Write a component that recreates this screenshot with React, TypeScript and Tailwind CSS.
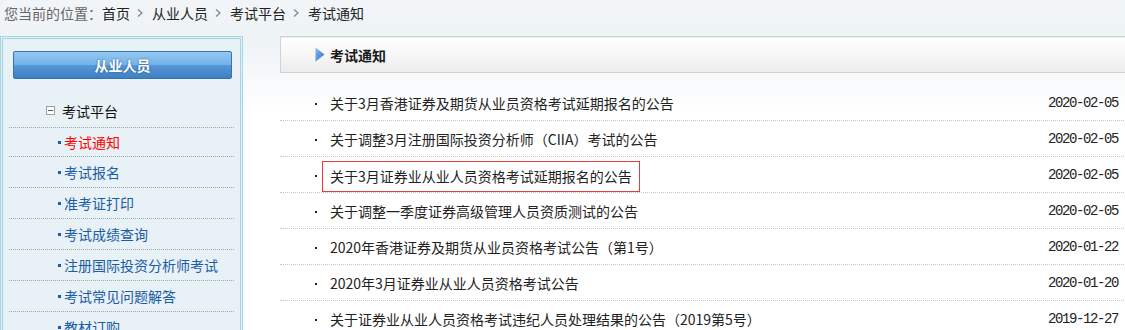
import React from "react";

const FONT = '"Noto Sans CJK SC", "Noto Sans", sans-serif';

const navItems: { label: string; h: string; active?: boolean }[] = [
  { label: "考试通知", h: "h-[29px]", active: true },
  { label: "考试报名", h: "h-[31px]" },
  { label: "准考证打印", h: "h-[31px]" },
  { label: "考试成绩查询", h: "h-[31px]" },
  { label: "注册国际投资分析师考试", h: "h-[31px]" },
  { label: "考试常见问题解答", h: "h-[31px]" },
  { label: "教材订购", h: "h-[31px]" },
];

const news: { title: string; date: string; boxed?: boolean }[] = [
  { title: "关于3月香港证券及期货从业员资格考试延期报名的公告", date: "2020-02-05" },
  { title: "关于调整3月注册国际投资分析师（CIIA）考试的公告", date: "2020-02-05" },
  { title: "关于3月证券业从业人员资格考试延期报名的公告", date: "2020-02-05", boxed: true },
  { title: "关于调整一季度证券高级管理人员资质测试的公告", date: "2020-02-05" },
  { title: "2020年香港证券及期货从业员资格考试公告（第1号）", date: "2020-01-22" },
  { title: "2020年3月证券业从业人员资格考试公告", date: "2020-01-20" },
  { title: "关于证券业从业人员资格考试违纪人员处理结果的公告（2019第5号）", date: "2019-12-27" },
];

function Chevron() {
  return (
    <svg width="6" height="10" viewBox="0 0 6 10" className="ml-[7px] mr-[9px] shrink-0">
      <polyline points="1,1.5 5,5 1,8.5" fill="none" stroke="#7a8a99" strokeWidth="1.3" />
    </svg>
  );
}

export default function App() {
  return (
    <div
      className="w-[1125px] h-[330px] overflow-hidden bg-[linear-gradient(to_bottom,#f1f5f8_0px,#eef3f6_40px,#ffffff_110px)] text-[14px] text-[#222]"
      style={{ fontFamily: FONT }}
    >
      {/* breadcrumb */}
      <div className="h-[26px] pl-[4px] flex items-center leading-none whitespace-nowrap">
        <span className="text-[#666]">您当前的位置：</span>
        <span>首页</span>
        <Chevron />
        <span>从业人员</span>
        <Chevron />
        <span>考试平台</span>
        <Chevron />
        <span>考试通知</span>
      </div>

      <div className="mt-[10px] flex">
        {/* left panel */}
        <div className="w-[243px] h-[300px] shrink-0 border-[3px] border-double border-[#a3d4e3] bg-[#e8f1f5]">
          <div className="mt-[12px] ml-[10px] mr-[8px] h-[28px] rounded-[2px] border border-[#3573ad] bg-[linear-gradient(to_bottom,#93c8f0_0%,#74b3e8_48%,#5597d8_52%,#3f80c2_100%)] flex items-center justify-center text-white font-bold text-[14px] leading-none [text-shadow:0_0_2px_#1d4f86]">
            从业人员
          </div>
          <div className="mx-[6px] mt-[16px]">
            <div className="h-[33px] border-b border-dotted border-[#98a7ae] flex items-center pb-[1px]">
              <span className="ml-[37px] w-[9px] h-[9px] border border-[#a0a0a0] bg-white flex items-center justify-center">
                <span className="w-[5px] h-px bg-[#555]" />
              </span>
              <span className="ml-[7px] leading-none text-[#111]">考试平台</span>
            </div>
            {navItems.map((it) => (
              <div
                key={it.label}
                className={`${it.h} border-b border-dotted border-[#98a7ae] flex items-center`}
              >
                <span className="ml-[49px] w-[3px] h-[3px] bg-[#1d5ea8] shrink-0" />
                <span
                  className={`ml-[3px] leading-none whitespace-nowrap ${
                    it.active ? "text-[#ff0000]" : "text-[#1b5ca6]"
                  }`}
                >
                  {it.label}
                </span>
              </div>
            ))}
          </div>
        </div>

        {/* right content */}
        <div className="ml-[37px] w-[860px] shrink-0">
          <div className="h-[37px] border border-[#d2d2d2] shadow-[inset_0_1px_0_#e9e9e9] bg-[linear-gradient(to_bottom,#ffffff_0%,#f7f7f7_50%,#ececec_100%)] flex items-center">
            <svg width="10" height="15" viewBox="0 0 10 15" className="ml-[34px]">
              <defs>
                <linearGradient id="tri" x1="0" y1="0" x2="1" y2="1">
                  <stop offset="0" stopColor="#8cc0f4" />
                  <stop offset="1" stopColor="#2766c8" />
                </linearGradient>
              </defs>
              <polygon points="0.5,0.5 9.5,7.5 0.5,14.5" fill="url(#tri)" />
            </svg>
            <span className="ml-[5px] font-bold leading-none text-[#1a1a1a]">考试通知</span>
          </div>

          <div className="mt-[12px]">
            {news.map((n) => (
              <div
                key={n.title}
                className="h-[36px] border-b border-dotted border-[#c6c6c6] flex items-center whitespace-nowrap"
              >
                <span className="ml-[35px] w-[15px] shrink-0 flex">
                  <span className="mt-[3px] w-[2px] h-[2px] bg-[#222]" />
                </span>
                {n.boxed ? (
                  <span className="-ml-[8px] mt-[3px] h-[31px] px-[7px] border border-[#e43c3c] flex items-center leading-none text-[#222]">
                    {n.title}
                  </span>
                ) : (
                  <span className="leading-none text-[#222]">{n.title}</span>
                )}
                <span
                  className="ml-auto mr-[22px] leading-none text-[14px] tracking-[-1.4px] text-[#222]"
                  style={{ fontFamily: '"Liberation Mono", monospace' }}
                >
                  {n.date}
                </span>
              </div>
            ))}
          </div>
        </div>
      </div>
    </div>
  );
}
